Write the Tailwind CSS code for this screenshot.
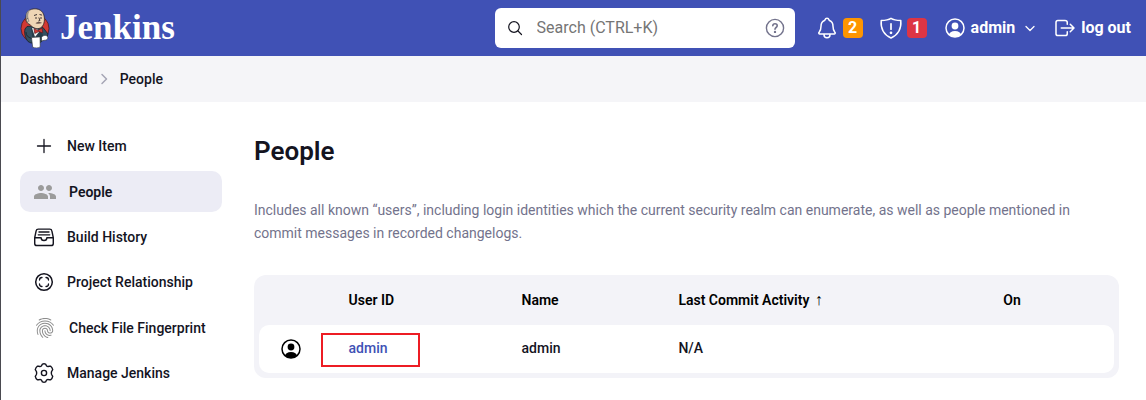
<!DOCTYPE html>
<html lang="en">
<head>
<meta charset="utf-8">
<meta name="viewport" content="width=device-width, initial-scale=1">
<title>People - Jenkins</title>
<script src="https://cdn.jsdelivr.net/npm/@tailwindcss/browser@4"></script>
</head>
<body class="min-h-screen border-l border-[#4a4a50] bg-white font-['Roboto',sans-serif] text-sm font-medium text-[#14141f]">

<header class="flex h-14 items-center bg-[#4051b5] pr-[15px] pl-[19px] text-white">
  <a href="#" class="flex items-center gap-2.5" aria-label="Jenkins home">
    <svg class="h-10 w-[30px]" viewBox="0 0 30 40" aria-hidden="true">
      <ellipse cx="15" cy="20.500" rx="14" ry="14" fill="#d33833" stroke="#3b1a20" stroke-width=".7"/>
      <path d="M7 18.500 5 21c-1 4 .2 9 3 12.500l3 1.500 10-1 3-3 3-2 1-3-5-6.500-5-2z" fill="#335061" stroke="#17202b" stroke-width=".8"/>
      <path d="m11 19 4 5 5-1 3 4-2 8h-8z" fill="#263d4a"/>
      <path d="m12 20 3 9 4-5-2-3z" fill="#f5f5f5"/>
      <path d="M6 9C6 3.500 10 .8 15 .8c5.500 0 9 3.500 9.400 9.200.3 5-1.400 9.500-5.400 10.500-3 .7-7-1-9-4C7 16 5 12 6 9z" fill="#efd5b5" stroke="#2c2326" stroke-width=".8"/>
      <path d="M6.200 9C5.600 5 8 2.500 10.500 1.600 8.600 4 8 6.500 8.200 9l1.300 4.500-1.700.5z" fill="#9a948d"/>
      <path d="M7.500 10.500c-1.500-.5-2 3 .6 4.200" fill="#efd5b5" stroke="#2c2326" stroke-width=".7"/>
      <path d="M14 7.500l3-1M19.500 6.500l2.600.6M15 10h2M20 10h2M18.800 9.500l1.200 3-1.700.6" fill="none" stroke="#2c2326" stroke-width=".9"/>
      <path d="M15.500 15.200c1.500-1.600 5-1.500 6.500-.3-2 .7-4 1.300-6.500.3z" fill="#6d5750"/>
      <path d="m14 20.500 4 2 4-2.500.8 5-4-1.500-4 2z" fill="#d33833" stroke="#571a20" stroke-width=".7"/>
      <path d="m11.500 29.500 8.500-.6.2 10c-2 1.300-5.500 1.300-7.500.3z" fill="#fff" stroke="#30363d" stroke-width=".6"/>
      <path d="M21.500 29.500c1-1.800 4-3.200 6-1 1.200 2-.5 3.800-3 3.800l-3 .7z" fill="#fff" stroke="#30363d" stroke-width=".7"/>
      <path d="M6 24c0 4 2 5 5.500 6.500" fill="none" stroke="#17202b" stroke-width=".8"/>
    </svg>
    <span class="font-['Liberation_Serif',serif] text-[35px] leading-[54px] font-bold">Jenkins</span>
  </a>

  <div class="ml-auto flex h-10 w-[300px] items-center rounded-md bg-white px-3 text-[#14141f]">
    <svg class="size-4 shrink-0" viewBox="0 0 16 16" fill="none" stroke="currentColor" stroke-width="1.200" stroke-linecap="round" aria-hidden="true"><circle cx="7" cy="7" r="5.300"/><path d="m11 11 3.500 3.500"/></svg>
    <input type="search" aria-label="Search" placeholder="Search (CTRL+K)" class="ml-3.5 min-w-0 flex-1 bg-transparent text-base font-normal outline-none placeholder:text-[#757575]">
    <button type="button" aria-label="Search help" class="-mr-0.5 text-[#73738c]">
      <svg class="size-5" viewBox="0 0 20 20" fill="none" stroke="currentColor" stroke-width="1.400" stroke-linecap="round" stroke-linejoin="round" aria-hidden="true"><circle cx="10" cy="10" r="8.600"/><path d="M7.800 7.800C7.900 6.400 8.800 5.800 10 5.800s2.200.8 2.200 2c0 1.700-2.200 1.700-2.200 3.400" stroke-width="1.600"/><circle cx="10" cy="13.900" r=".5" fill="currentColor"/></svg>
    </button>
  </div>

  <div class="ml-5 flex items-center text-base font-bold">
    <button type="button" class="flex items-center gap-1" aria-label="2 notifications">
      <svg class="size-6" viewBox="0 0 512 512" fill="none" stroke="currentColor" stroke-width="32" stroke-linecap="round" stroke-linejoin="round" aria-hidden="true"><path d="M427.680 351.430C402 320 383.870 304 383.870 217.350 383.870 138 343.350 109.730 310 96c-4.430-1.820-8.600-6-9.950-10.550C294.200 65.540 277.800 48 256 48s-38.210 17.550-44 37.470c-1.350 4.600-5.520 8.710-9.950 10.530-33.390 13.750-73.870 41.920-73.870 121.350C128.130 304 110 320 84.320 351.430 73.680 364.450 83 384 101.610 384h308.880c18.510 0 27.770-19.610 17.190-32.570zM320 384v16a64 64 0 0 1-128 0v-16"/></svg>
      <span class="size-5 rounded-[4px] bg-[#fe9500] text-center leading-5">2</span>
    </button>
    <button type="button" class="ml-4 flex items-center gap-1" aria-label="1 security warning">
      <svg class="size-6" viewBox="0 0 24 24" fill="none" stroke="currentColor" stroke-width="1.500" stroke-linecap="round" stroke-linejoin="round" aria-hidden="true"><path d="M12 2.300C9.500 3.900 5.700 4.400 2.200 4.600 1.500 12.500 4.500 18.500 12 22c7.500-3.500 10.500-9.500 9.800-17.400-3.500-.2-7.300-.7-9.800-2.300z"/><path d="m12 7.800v5.400" stroke-width="1.700"/><circle cx="12" cy="16.800" r=".6" fill="currentColor"/></svg>
      <span class="size-5 rounded-[4px] bg-[#dc3545] text-center leading-5">1</span>
    </button>
    <a href="#" class="ml-[18px] flex items-center gap-1.5">
      <svg class="size-5" viewBox="0 0 20 20" aria-hidden="true"><defs><clipPath id="disc"><circle cx="10" cy="10" r="9"/></clipPath></defs><circle cx="10" cy="10" r="9" fill="none" stroke="currentColor" stroke-width="1.500"/><circle cx="10" cy="8" r="3.400" fill="currentColor"/><ellipse cx="10" cy="17.300" rx="6.200" ry="4.300" fill="currentColor" clip-path="url(#disc)"/></svg>
      admin
    </a>
    <button type="button" class="ml-2 flex" aria-label="User menu">
      <svg class="size-3.5" viewBox="0 0 14 14" fill="none" stroke="currentColor" stroke-width="1.300" stroke-linecap="round" stroke-linejoin="round" aria-hidden="true"><path d="m3 5.500 4 4 4-4"/></svg>
    </button>
    <a href="#" class="ml-4 flex items-center gap-1">
      <svg class="size-6" viewBox="0 0 512 512" fill="none" stroke="currentColor" stroke-width="32" stroke-linecap="round" stroke-linejoin="round" aria-hidden="true"><path d="M304 336v40a40 40 0 0 1-40 40H104a40 40 0 0 1-40-40V136a40 40 0 0 1 40-40h152c22.090 0 48 17.910 48 40v40M368 336l80-80-80-80M176 256h256"/></svg>
      log out
    </a>
  </div>
</header>

<nav aria-label="Breadcrumb" class="flex h-[46px] items-center gap-2.5 bg-[#f5f5f8] pl-[19px]">
  <a href="#">Dashboard</a>
  <svg class="size-3" viewBox="0 0 12 12" fill="none" stroke="#a5a5b5" stroke-width="1.500" stroke-linecap="round" stroke-linejoin="round" aria-hidden="true"><path d="m4 1.500 4.500 4.500L4 10.500"/></svg>
  <a href="#">People</a>
</nav>

<div class="flex gap-8 pr-[27px] pl-[19px]">
  <nav aria-label="Tasks" class="flex w-[202px] shrink-0 flex-col gap-[5px] pt-6">
    <a href="#" class="flex h-10 items-center gap-[13px] rounded-[10px] px-3.5">
      <svg class="size-5" viewBox="0 0 20 20" fill="none" stroke="currentColor" stroke-width="1.300" stroke-linecap="round" aria-hidden="true"><path d="M10 3.500v13M3.500 10h13"/></svg>
      New Item
    </a>
    <a href="#" aria-current="page" class="flex h-[41px] items-center gap-3 rounded-[10px] bg-[#ececf5] px-[13px] font-semibold">
      <svg class="size-6" viewBox="0 0 24 24" fill="#9b9b9b" aria-hidden="true"><path d="M16 11c1.660 0 2.990-1.340 2.990-3S17.660 5 16 5c-1.660 0-3 1.340-3 3s1.340 3 3 3zm-8 0c1.660 0 2.990-1.340 2.990-3S9.660 5 8 5C6.340 5 5 6.340 5 8s1.340 3 3 3zm0 2c-2.330 0-7 1.170-7 3.500V19h14v-2.500c0-2.330-4.670-3.500-7-3.500zm8 0c-.29 0-.62.02-.97.05 1.160.84 1.970 1.970 1.970 3.450V19h6v-2.500c0-2.330-4.670-3.500-7-3.500z"/></svg>
      People
    </a>
    <a href="#" class="flex h-10 items-center gap-[13px] rounded-[10px] px-3.5">
      <svg class="size-5" viewBox="32 32 448 448" fill="none" stroke="currentColor" stroke-width="32" stroke-linecap="round" stroke-linejoin="round" aria-hidden="true"><path d="M384 80H128c-26 0-43 14-48 40L48 272v128a48.140 48.140 0 0 0 48 48h320a48.140 48.140 0 0 0 48-48V272l-32-152c-5-27-23-40-48-40zM48 272h144M320 272h144M192 272a64 64 0 0 0 128 0M144 144h224M128 208h256"/></svg>
      Build History
    </a>
    <a href="#" class="flex h-10 items-center gap-[13px] rounded-[10px] px-3.5">
      <svg class="size-5" viewBox="0 0 20 20" fill="none" stroke="currentColor" stroke-width="1.500" stroke-linecap="round" aria-hidden="true"><circle cx="10" cy="10" r="8.300"/><path d="M8 5.500C6.500 5.500 5.500 6.500 5.500 8M12 5.500c1.500 0 2.500 1 2.500 2.500M8 14.500c-1.500 0-2.500-1-2.500-2.500M12 14.500c1.500 0 2.500-1 2.500-2.500" stroke-width="1.300"/></svg>
      Project Relationship
    </a>
    <a href="#" class="flex h-[41px] items-center gap-3 rounded-[10px] px-[13px]">
      <svg class="size-6 shrink-0" viewBox="0 0 24 24" fill="#8c8c8c" aria-hidden="true"><path d="M17.810 4.470c-.08 0-.16-.02-.23-.06C15.660 3.420 14 3 12.010 3c-1.980 0-3.860.47-5.570 1.410-.24.13-.54.04-.68-.2-.13-.24-.04-.55.2-.68C7.820 2.520 9.860 2 12.010 2c2.130 0 3.990.47 6.030 1.520.25.13.34.43.21.67-.09.18-.26.28-.44.28zM3.500 9.720c-.1 0-.2-.03-.29-.09-.23-.16-.28-.47-.12-.7.99-1.400 2.250-2.500 3.750-3.270C9.980 4.040 14 4.030 17.150 5.650c1.500.77 2.760 1.860 3.750 3.250.16.22.11.54-.12.7-.23.16-.54.11-.7-.12-.9-1.260-2.040-2.250-3.390-2.940-2.870-1.470-6.540-1.470-9.400.01-1.360.7-2.500 1.700-3.400 2.960-.08.14-.23.21-.39.21zm6.250 12.070c-.13 0-.26-.05-.35-.15-.87-.87-1.340-1.430-2.010-2.640-.69-1.230-1.050-2.730-1.050-4.340 0-2.970 2.540-5.390 5.660-5.390s5.660 2.420 5.660 5.390c0 .28-.22.5-.5.5s-.5-.22-.5-.5c0-2.420-2.090-4.390-4.660-4.390-2.570 0-4.660 1.970-4.660 4.390 0 1.440.32 2.770.93 3.850.64 1.150 1.080 1.640 1.850 2.420.19.2.19.51 0 .71-.11.1-.24.15-.37.15zm7.170-1.850c-1.190 0-2.240-.3-3.100-.89-1.490-1.010-2.380-2.650-2.380-4.390 0-.28.22-.5.5-.5s.5.22.5.5c0 1.410.72 2.740 1.940 3.560.71.48 1.540.71 2.540.71.24 0 .64-.03 1.040-.1.27-.05.53.13.58.41.05.27-.13.53-.41.58-.57.11-1.070.12-1.210.12zM14.910 22c-.04 0-.09-.01-.13-.02-1.590-.44-2.630-1.030-3.720-2.100-1.400-1.390-2.170-3.240-2.170-5.220 0-1.620 1.380-2.940 3.080-2.940 1.700 0 3.080 1.320 3.080 2.940 0 1.070.93 1.940 2.080 1.940s2.080-.87 2.080-1.940c0-3.770-3.250-6.830-7.250-6.830-2.840 0-5.440 1.580-6.610 4.030-.39.81-.59 1.760-.59 2.800 0 .78.07 2.010.67 3.610.1.26-.03.55-.29.64-.26.1-.55-.04-.64-.29-.49-1.310-.73-2.610-.73-3.960 0-1.200.23-2.290.68-3.240 1.330-2.790 4.280-4.600 7.510-4.600 4.550 0 8.250 3.510 8.250 7.830 0 1.620-1.380 2.940-3.080 2.940s-3.080-1.320-3.080-2.940c0-1.070-.93-1.940-2.080-1.940s-2.080.87-2.080 1.940c0 1.710.66 3.310 1.870 4.510.95.94 1.860 1.460 3.270 1.850.27.07.42.35.35.61-.05.23-.26.38-.47.38z"/></svg>
      <span class="whitespace-nowrap">Check File Fingerprint</span>
    </a>
    <a href="#" class="flex h-10 items-center gap-[13px] rounded-[10px] px-3.5">
      <svg class="size-5" viewBox="0 0 20 20" fill="none" stroke="currentColor" stroke-width="1.400" stroke-linejoin="round" aria-hidden="true"><circle cx="10" cy="10" r="2.600"/><path d="M8.400 1.100Q10 .5 11.600 1.100L12.600 3Q13.600 3.700 14.800 3.300L16.700 3.300Q18.300 4.600 18.700 6.700L17.600 8.500Q17.100 10 17.600 11.500L18.700 13.300Q18.300 15.400 16.700 16.700L14.800 16.700Q13.600 16.300 12.600 17L11.600 18.900Q10 19.500 8.400 18.900L7.400 17Q6.400 16.300 5.200 16.700L3.300 16.700Q1.700 15.400 1.300 13.300L2.400 11.500Q2.900 10 2.400 8.500L1.300 6.700Q1.700 4.600 3.300 3.300L5.200 3.300Q6.400 3.700 7.400 3z"/></svg>
      Manage Jenkins
    </a>
  </nav>

  <main class="min-w-0 flex-1 pt-[31px]">
    <h1 class="text-[26px] leading-9 font-semibold">People</h1>
    <p class="mt-[30px] leading-[23px] font-normal text-[#73738c]">Includes all known “users”, including login identities which the current security realm can enumerate, as well as people mentioned in commit messages in recorded changelogs.</p>
    <div class="mt-[30px] rounded-[12px] bg-[#f3f3f8] px-[5px] pb-[5px]">
      <table class="w-full table-fixed border-separate border-spacing-0 text-left" aria-label="People">
        <colgroup><col class="w-[10%]"><col class="w-[20%]"><col class="w-[18%]"><col class="w-[38%]"><col></colgroup>
        <thead class="text-black">
          <tr class="h-[50px]">
            <td></td>
            <th scope="col" class="pl-1 font-semibold">User ID</th>
            <th scope="col" class="pl-[6px] font-semibold">Name</th>
            <th scope="col" class="pl-[9px] font-semibold">Last Commit Activity <span class="ml-0.5 font-['Liberation_Sans',sans-serif] text-base leading-5">↑</span></th>
            <th scope="col" class="pl-[9px] font-semibold">On</th>
          </tr>
        </thead>
        <tbody>
          <tr class="h-12">
            <td class="rounded-l-[10px] bg-white pl-[22px]">
              <svg class="size-5" viewBox="0 0 20 20" fill="#000" aria-hidden="true"><circle cx="10" cy="10" r="9" fill="none" stroke="#000" stroke-width="1.500"/><circle cx="10" cy="8" r="3.400"/><ellipse cx="10" cy="17.300" rx="6.200" ry="4.300" clip-path="url(#disc)"/></svg>
            </td>
            <td class="bg-white pb-0.5 pl-1">
              <a href="#" class="relative text-[#4051b5]">admin<span class="absolute -top-[7px] -right-8 -bottom-[11px] -left-7 border-2 border-[#ed1c24]"></span></a>
            </td>
            <td class="bg-white pb-0.5 pl-[6px]">admin</td>
            <td class="bg-white pb-0.5 pl-[9px]">N/A</td>
            <td class="rounded-r-[10px] bg-white"></td>
          </tr>
        </tbody>
      </table>
    </div>
  </main>
</div>
</body>
</html>
